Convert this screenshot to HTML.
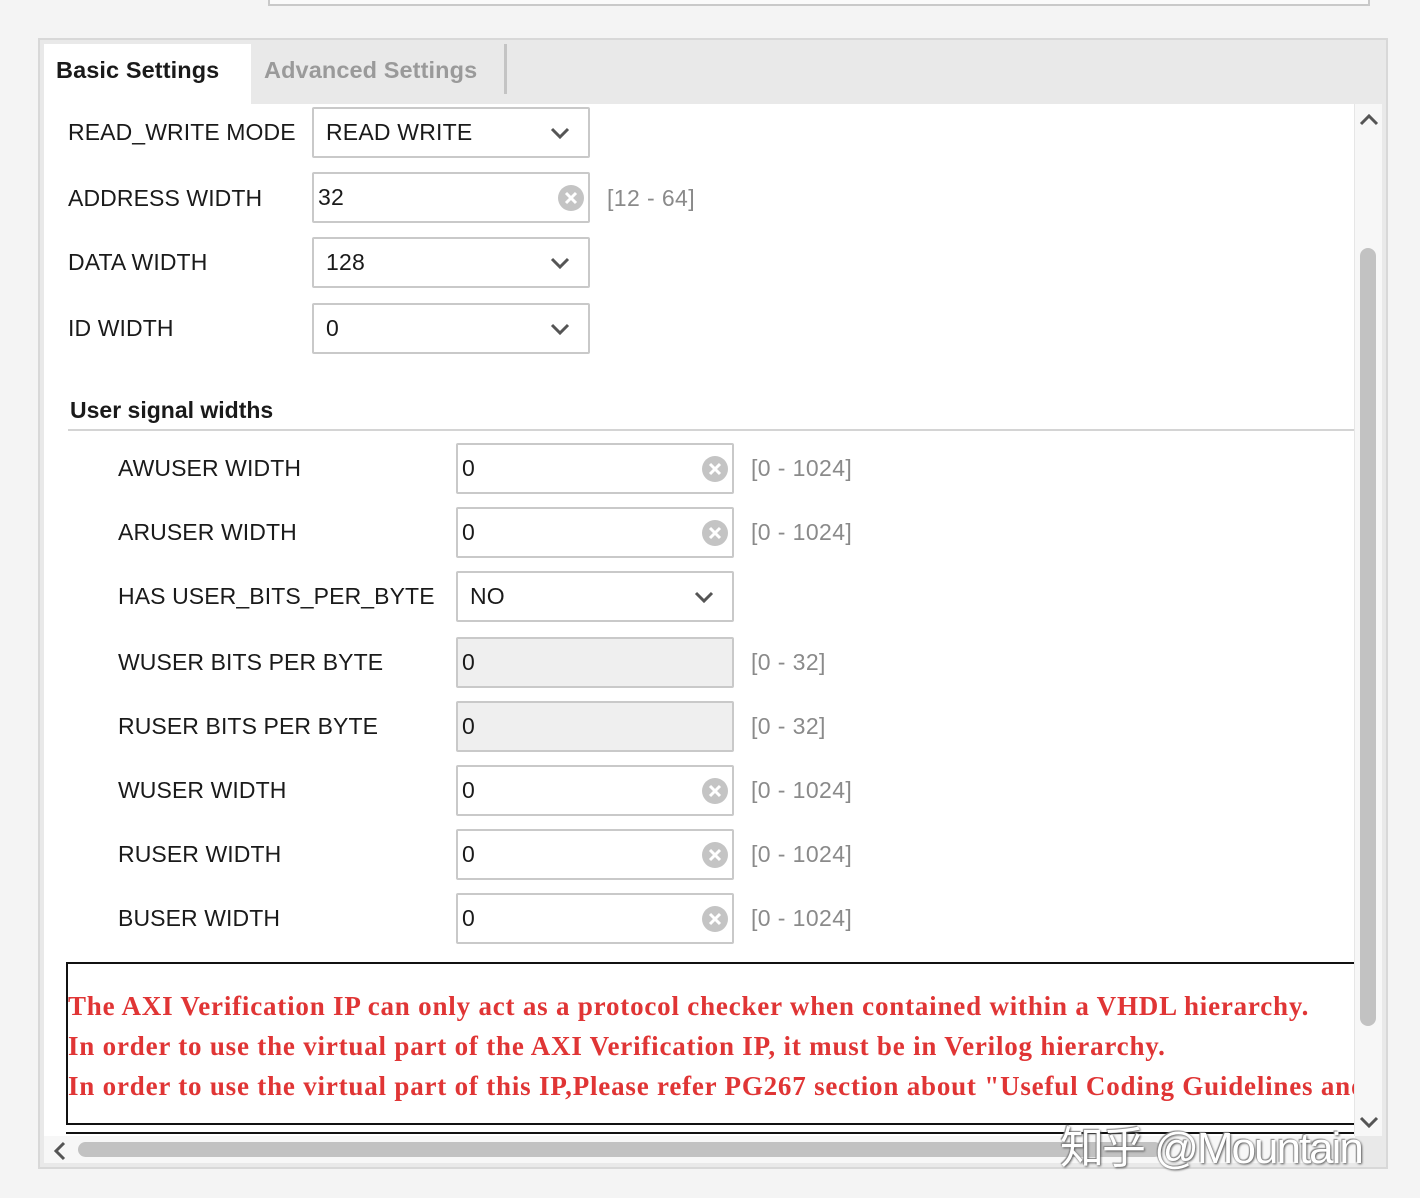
<!DOCTYPE html>
<html><head><meta charset="utf-8"><style>
*{margin:0;padding:0;box-sizing:border-box}
body{width:1420px;height:1198px;background:#f4f4f4;position:relative;overflow:hidden;font-family:"Liberation Sans",Arial,sans-serif;color:#1a1a1a}
.a{position:absolute}
.lbl{position:absolute;font-size:23px;letter-spacing:0.1px;line-height:26px}
.box{position:absolute;width:278px;height:51px;border:2px solid #c9c9c9;border-radius:2px;background:#fff;font-size:23px;line-height:47px;padding-left:12px;letter-spacing:0.2px}
.box.dis{background:#efefef;padding-left:4px}
.box.in{padding-left:4px}
.rng{position:absolute;font-size:23px;color:#8a8a8a;letter-spacing:0.4px}
.chev{position:absolute;right:18px;top:17px}
.red{font-family:"Liberation Serif","Times New Roman",serif;font-weight:bold;color:#e03535;font-size:27px;position:absolute;left:0px;white-space:nowrap;letter-spacing:0.8px}
</style></head><body>
<div class="a" style="left:268px;top:-4px;width:1102px;height:10px;border:2px solid #c9c9c9;border-top:none;background:#fafafa"></div>
<div class="a" style="left:38px;top:38px;width:1350px;height:1131px;border:2px solid #d8d8d8;background:#e9e9e9"></div>
<div class="a" style="left:44px;top:104px;width:1311px;height:1032px;background:#fff"></div>
<div class="a" style="left:44px;top:44px;width:207px;height:62px;background:#fff"></div>
<div class="a" style="left:56px;top:57px;font-size:23.5px;font-weight:bold;letter-spacing:0.1px">Basic Settings</div>
<div class="a" style="left:264px;top:57px;font-size:23.5px;font-weight:bold;color:#9a9a9a;letter-spacing:0.1px">Advanced Settings</div>
<div class="a" style="left:504px;top:44px;width:3px;height:50px;background:#c4c4c4"></div>

<svg width="0" height="0" style="position:absolute"><defs>
<symbol id="ch" viewBox="0 0 20 14"><path d="M2 3 L10 11 L18 3" fill="none" stroke="#555" stroke-width="3"/></symbol>
<symbol id="x" viewBox="0 0 26 26"><circle cx="13" cy="13" r="13" fill="#c4c4c4"/><path d="M8 8 L18 18 M18 8 L8 18" stroke="#fff" stroke-width="3"/></symbol>
</defs></svg>

<div class="lbl" style="left:68px;top:119px">READ_WRITE MODE</div>
<div class="box" style="left:312px;top:107px">READ WRITE<svg class="chev" width="20" height="14"><use href="#ch"/></svg></div>
<div class="lbl" style="left:68px;top:185px">ADDRESS WIDTH</div>
<div class="box in" style="left:312px;top:172px">32<svg class="a" style="right:4px;top:11px" width="26" height="26"><use href="#x"/></svg></div>
<div class="rng" style="left:607px;top:185px">[12 - 64]</div>
<div class="lbl" style="left:68px;top:249px">DATA WIDTH</div>
<div class="box" style="left:312px;top:237px">128<svg class="chev" width="20" height="14"><use href="#ch"/></svg></div>
<div class="lbl" style="left:68px;top:315px">ID WIDTH</div>
<div class="box" style="left:312px;top:303px">0<svg class="chev" width="20" height="14"><use href="#ch"/></svg></div>

<div class="a" style="left:70px;top:397px;font-size:23px;font-weight:bold;letter-spacing:0px">User signal widths</div>
<div class="a" style="left:68px;top:429px;width:1286px;height:2px;background:#d4d4d4"></div>

<div class="lbl" style="left:118px;top:455px">AWUSER WIDTH</div>
<div class="box in" style="left:456px;top:443px">0<svg class="a" style="right:4px;top:11px" width="26" height="26"><use href="#x"/></svg></div>
<div class="rng" style="left:751px;top:455px">[0 - 1024]</div>
<div class="lbl" style="left:118px;top:519px">ARUSER WIDTH</div>
<div class="box in" style="left:456px;top:507px">0<svg class="a" style="right:4px;top:11px" width="26" height="26"><use href="#x"/></svg></div>
<div class="rng" style="left:751px;top:519px">[0 - 1024]</div>
<div class="lbl" style="left:118px;top:583px">HAS USER_BITS_PER_BYTE</div>
<div class="box" style="left:456px;top:571px">NO<svg class="chev" width="20" height="14"><use href="#ch"/></svg></div>
<div class="lbl" style="left:118px;top:649px">WUSER BITS PER BYTE</div>
<div class="box dis" style="left:456px;top:637px">0</div>
<div class="rng" style="left:751px;top:649px">[0 - 32]</div>
<div class="lbl" style="left:118px;top:713px">RUSER BITS PER BYTE</div>
<div class="box dis" style="left:456px;top:701px">0</div>
<div class="rng" style="left:751px;top:713px">[0 - 32]</div>
<div class="lbl" style="left:118px;top:777px">WUSER WIDTH</div>
<div class="box in" style="left:456px;top:765px">0<svg class="a" style="right:4px;top:11px" width="26" height="26"><use href="#x"/></svg></div>
<div class="rng" style="left:751px;top:777px">[0 - 1024]</div>
<div class="lbl" style="left:118px;top:841px">RUSER WIDTH</div>
<div class="box in" style="left:456px;top:829px">0<svg class="a" style="right:4px;top:11px" width="26" height="26"><use href="#x"/></svg></div>
<div class="rng" style="left:751px;top:841px">[0 - 1024]</div>
<div class="lbl" style="left:118px;top:905px">BUSER WIDTH</div>
<div class="box in" style="left:456px;top:893px">0<svg class="a" style="right:4px;top:11px" width="26" height="26"><use href="#x"/></svg></div>
<div class="rng" style="left:751px;top:905px">[0 - 1024]</div>

<div class="a" style="left:66px;top:962px;width:1300px;height:163px;border:2px solid #111;border-right:none;overflow:hidden;background:#fff">
<div class="red" style="top:27px">The AXI Verification IP can only act as a protocol checker when contained within a VHDL hierarchy.</div>
<div class="red" style="top:67px">In order to use the virtual part of the AXI Verification IP, it must be in Verilog hierarchy.</div>
<div class="red" style="top:107px">In order to use the virtual part of this IP,Please refer PG267 section about "Useful Coding Guidelines and Examples"</div>
</div>
<div class="a" style="left:66px;top:1132px;width:1288px;height:2px;background:#111"></div>

<div class="a" style="left:1354px;top:104px;width:28px;height:1032px;background:#f7f7f7;border-left:1px solid #e6e6e6"></div>
<svg class="a" style="left:1358px;top:112px" width="22" height="16"><path d="M3 12 L11 4 L19 12" fill="none" stroke="#555" stroke-width="3"/></svg>
<div class="a" style="left:1360px;top:248px;width:16px;height:778px;border-radius:8px;background:#c2c2c2"></div>
<svg class="a" style="left:1358px;top:1114px" width="22" height="16"><path d="M3 4 L11 12 L19 4" fill="none" stroke="#555" stroke-width="3"/></svg>
<div class="a" style="left:44px;top:1136px;width:1311px;height:27px;background:#f7f7f7"></div>
<svg class="a" style="left:52px;top:1140px" width="16" height="22"><path d="M12 3 L4 11 L12 19" fill="none" stroke="#555" stroke-width="3"/></svg>
<div class="a" style="left:78px;top:1142px;width:1084px;height:15px;border-radius:8px;background:#c2c2c2"></div>
<div class="a" style="left:1060px;top:1112px;font-size:44px;color:#fff;font-family:'Liberation Sans','Noto Sans CJK SC',sans-serif;text-shadow:1px 1px 2px #555,-1px -1px 1px #888;letter-spacing:-2px;white-space:nowrap">知乎 @Mountain</div>
</body></html>
